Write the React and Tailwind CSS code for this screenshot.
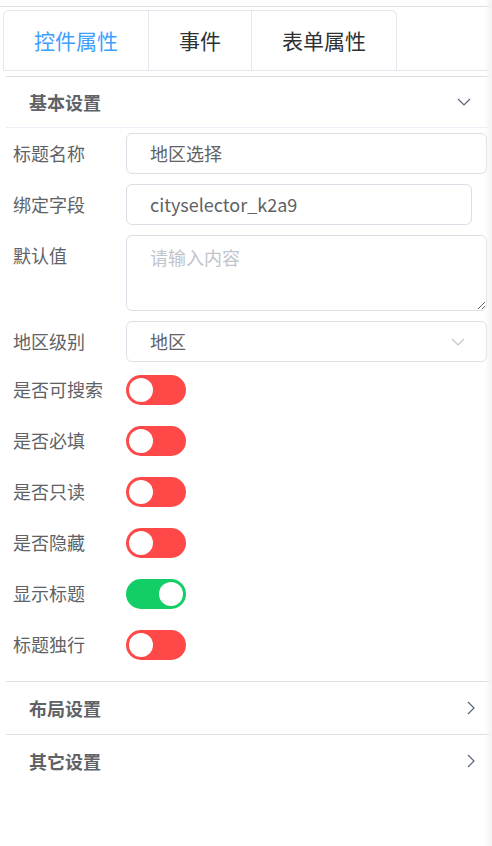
import React, { useState } from 'react';

const font = { fontFamily: '"Noto Sans CJK SC", "Noto Sans", sans-serif' };

const ChevronDown = ({ className }) => (
    <svg className={className} width="14" height="8" viewBox="0 0 14 8" fill="none">
        <path d="M1 1l6 6 6-6" stroke="currentColor" strokeWidth="1.2" />
    </svg>
);

const ChevronRight = () => (
    <svg width="8" height="14" viewBox="0 0 8 14" fill="none" className="text-[#5a6478]">
        <path d="M1 1l6 6-6 6" stroke="currentColor" strokeWidth="1.2" />
    </svg>
);

const Switch = ({ on }) => (
    <div className={`relative w-[60px] h-[30px] rounded-full ${on ? 'bg-[#13ce66]' : 'bg-[#ff4949]'}`}>
        <div className={`absolute top-[3px] size-[24px] rounded-full bg-white ${on ? 'right-[3px]' : 'left-[3px]'}`} />
    </div>
);

const Row = ({ label, children, top, className = '' }) => (
    <div className={`flex ${top ? 'items-start' : 'items-center'} min-h-[41px] ${className}`}>
        <label className="w-[113px] shrink-0 leading-[41px] text-[18px] text-[#606266]">{label}</label>
        <div className="flex-1 flex items-center">{children}</div>
    </div>
);

const Input = ({ value, className = '' }) => (
    <div className={`h-[41px] flex items-center border border-[#dcdfe6] rounded-[6px] pl-[23px] text-[18px] text-[#606266] bg-white ${className}`}>
        {value}
    </div>
);

const App = () => {
    const [tab] = useState(0);
    const tabs = ['控件属性', '事件', '表单属性'];
    const switches = [
        ['是否可搜索', false],
        ['是否必填', false],
        ['是否只读', false],
        ['是否隐藏', false],
        ['显示标题', true],
        ['标题独行', false],
    ];

    return (
        <div className="relative w-[492px] h-[846px] bg-white overflow-hidden" style={font}>
            <div className="pt-[6px]">
                <div className="border-t border-[#dcdfe6] pt-[3px] pl-[3px]">
                    <div className="flex border-b border-[#e4e7ed] mr-[2px]">
                        <div className="flex border border-b-0 border-[#e4e7ed] rounded-t-[6px] h-[60px]">
                            {tabs.map((t, i) => (
                                <div
                                    key={t}
                                    className={`flex items-center justify-center text-[21px] ${i > 0 ? 'border-l border-[#e4e7ed]' : ''} ${i === tab ? 'text-[#409eff]' : 'text-[#303133]'} ${i === 0 ? 'w-[144px]' : i === 1 ? 'w-[103px]' : 'w-[145px]'}`}
                                >
                                    {t}
                                </div>
                            ))}
                        </div>
                    </div>
                </div>
            </div>

            <div className="mt-[5px] ml-[6px] mr-[2px] border-t border-[#dcdfe6]">
                <div className="h-[51px] flex items-center justify-between pl-[23px] pr-[19px] border-b border-[#ebeef5]">
                    <span className="text-[18px] font-bold text-[#606266]">基本设置</span>
                    <ChevronDown className="text-[#5a6478]" />
                </div>

                <div className="pl-[7px] pr-[3px] pt-[5px] pb-[16px] flex flex-col gap-[10px]">
                    <Row label="标题名称">
                        <Input value="地区选择" className="w-full" />
                    </Row>
                    <Row label="绑定字段">
                        <Input value="cityselector_k2a9" className="w-[346px]" />
                    </Row>
                    <Row label="默认值" top>
                        <textarea
                            placeholder="请输入内容"
                            className="w-full h-[76px] border border-[#dcdfe6] rounded-[6px] pl-[23px] pt-[8px] text-[18px] text-[#606266] placeholder:text-[#c0c4cc] outline-none resize-y"
                            style={font}
                        />
                    </Row>
                    <Row label="地区级别">
                        <div className="w-full h-[41px] flex items-center justify-between border border-[#dcdfe6] rounded-[6px] pl-[23px] pr-[21px] text-[18px] text-[#606266]">
                            <span>地区</span>
                            <ChevronDown className="text-[#c0c4cc]" />
                        </div>
                    </Row>
                    {switches.map(([l, on], i) => (
                        <Row key={l} label={l} className={i === 0 ? '-mt-[3px]' : ''}>
                            <Switch on={on} />
                        </Row>
                    ))}
                </div>

                <div className="h-[53px] flex items-center justify-between pl-[23px] pr-[15px] border-t border-[#dcdfe6]">
                    <span className="text-[18px] font-bold text-[#606266]">布局设置</span>
                    <ChevronRight />
                </div>
                <div className="h-[53px] flex items-center justify-between pl-[23px] pr-[15px] border-t border-[#dcdfe6]">
                    <span className="text-[18px] font-bold text-[#606266]">其它设置</span>
                    <ChevronRight />
                </div>
            </div>

            <div className="absolute top-0 right-0 h-full w-[8px] bg-gradient-to-r from-transparent to-[#f2f2f2]" />
        </div>
    );
};

export default App;
